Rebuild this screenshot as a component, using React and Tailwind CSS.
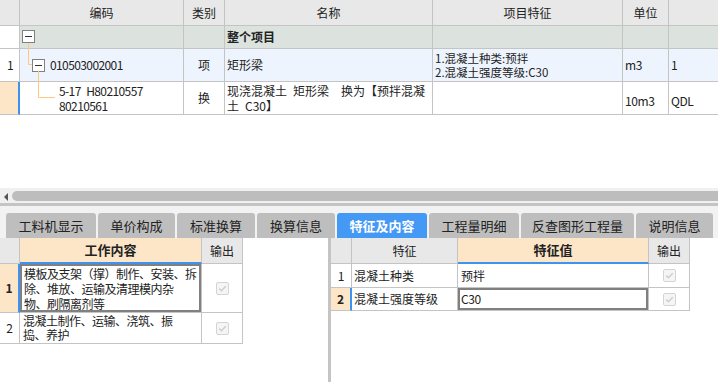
import React from 'react';

const FONT = "font-['Noto_Sans_CJK_SC',sans-serif]";

const Box = () => (
  <span className="flex h-[13px] w-[13px] items-center justify-center border border-[#808080] bg-white">
    <span className="h-px w-[7px] bg-[#333]" />
  </span>
);

const Check = () => (
  <svg width="13" height="13" viewBox="0 0 13 13">
    <rect x="0.5" y="0.5" width="12" height="12" rx="1.5" fill="#f5f5f5" stroke="#d4d4d4" />
    <path d="M3.3 6.6 L5.4 8.7 L9.8 4.2" fill="none" stroke="#cfcfcf" strokeWidth="1.6" />
  </svg>
);

const line = 'border-r border-b border-[#c4c4c4]';

const TopTable = () => (
  <div className="relative flex flex-col">
    {/* header */}
    <div className="flex h-[26px] bg-[#e8e8e8] text-[#222]">
      <div className={`w-[20px] ${line}`} />
      <div className={`w-[164px] ${line} flex items-center justify-center`}>编码</div>
      <div className={`w-[41px] ${line} flex items-center justify-center`}>类别</div>
      <div className={`w-[208px] ${line} flex items-center justify-center`}>名称</div>
      <div className={`w-[190px] ${line} flex items-center justify-center`}>项目特征</div>
      <div className={`w-[46px] ${line} flex items-center justify-center`}>单位</div>
      <div className="flex-1 border-b border-[#c4c4c4]" />
    </div>

    {/* 整个项目 */}
    <div className="flex h-[23px]">
      <div className={`w-[20px] ${line} bg-white`} />
      <div className={`w-[164px] ${line} bg-[#dce3df] pl-[2px] pt-[4px]`}>
        <Box />
      </div>
      <div className={`w-[41px] ${line} bg-[#dce3df]`} />
      <div className={`w-[208px] ${line} bg-[#dce3df] flex items-center pl-[2px] font-bold text-[#222]`}>整个项目</div>
      <div className={`w-[190px] ${line} bg-[#dce3df]`} />
      <div className={`w-[46px] ${line} bg-[#dce3df]`} />
      <div className="flex-1 border-b border-[#c4c4c4] bg-[#dce3df]" />
    </div>

    {/* row 1 */}
    <div className="flex h-[33px] bg-[#eef4fd] text-[#222]">
      <div className={`w-[20px] ${line} bg-white flex items-center pl-[7px]`}>1</div>
      <div className={`w-[164px] ${line} flex items-center pl-[12px] gap-[5px]`}>
        <Box />
        <span className="tracking-[-0.6px]">010503002001</span>
      </div>
      <div className={`w-[41px] ${line} flex items-center justify-center`}>项</div>
      <div className={`w-[208px] ${line} flex items-center pl-[2px]`}>矩形梁</div>
      <div className={`w-[190px] ${line} flex flex-col justify-center pl-[2px] leading-[14px] text-[11.5px]`}>
        <span>1.混凝土种类:预拌</span>
        <span>2.混凝土强度等级:C30</span>
      </div>
      <div className={`w-[46px] ${line} flex items-center pl-[2px] tracking-[-0.4px]`}>m3</div>
      <div className="flex-1 border-b border-[#c4c4c4] flex items-center pl-[2px]">1</div>
    </div>

    {/* row 2 */}
    <div className="flex h-[33px] bg-white text-[#222]">
      <div className="w-[20px] border-r-2 border-r-[#3d93f0] border-b border-b-[#c4c4c4] bg-[#fde6c8]" />
      <div className={`w-[164px] ${line} flex flex-col justify-center pl-[39px] leading-[15px] tracking-[-0.6px]`}>
        <span className="whitespace-pre">5-17{'\u2002'}H80210557</span>
        <span>80210561</span>
      </div>
      <div className={`w-[41px] ${line} flex items-center justify-center`}>换</div>
      <div className={`w-[208px] ${line} flex flex-col justify-center pl-[2px] leading-[15px]`}>
        <span className="whitespace-pre">现浇混凝土{'\u2002'}矩形梁{'\u2002\u2002'}换为【预拌混凝</span>
        <span className="whitespace-pre">土{'\u2002'}C30】</span>
      </div>
      <div className={`w-[190px] ${line}`} />
      <div className={`w-[46px] ${line} flex items-center pl-[2px] pt-[6px] tracking-[-0.4px]`}>10m3</div>
      <div className="flex-1 border-b border-[#c4c4c4] flex items-center pl-[2px] pt-[6px] tracking-[-0.4px]">QDL</div>
    </div>

    {/* tree connectors */}
    <svg className="absolute left-0 top-0" width="60" height="115">
      <path d="M28.5 43 V64.5 H32" fill="none" stroke="#ffc880" />
      <path d="M38.5 71 V97.5 H55" fill="none" stroke="#ffc880" />
    </svg>
  </div>
);

const tabs = [
  { label: '工料机显示', w: 'w-[90px]' },
  { label: '单价构成', w: 'w-[77px]' },
  { label: '标准换算', w: 'w-[78px]' },
  { label: '换算信息', w: 'w-[78px]' },
  { label: '特征及内容', w: 'w-[90px]', active: true },
  { label: '工程量明细', w: 'w-[90px]' },
  { label: '反查图形工程量', w: 'w-[113px]' },
  { label: '说明信息', w: 'w-[77px]' },
];

const hcell = 'border-r border-b border-[#c4c4c4] bg-[#e8e8e8] flex items-center justify-center';

const LeftPanel = () => (
  <div className="w-[328px] bg-white">
    <div className="flex h-[26px]">
      <div className={`w-[20px] ${hcell}`} />
      <div className="w-[182px] border-r border-[#c4c4c4] border-b-2 border-b-[#3d93f0] bg-[#fde6c8] flex items-center justify-center font-bold text-[13px] text-[#222]">
        工作内容
      </div>
      <div className={`w-[41px] ${hcell}`}>输出</div>
    </div>
    <div className="flex h-[49px]">
      <div className="w-[20px] border-r-2 border-r-[#3d93f0] border-b border-b-[#c4c4c4] bg-[#fde6c8] flex items-center justify-center font-bold">1</div>
      <div className="w-[182px] border-r border-b border-[#c4c4c4]">
        <div className="h-full overflow-hidden whitespace-nowrap border-2 border-[#808080] pl-[2px] leading-[15px] tracking-[-0.5px] text-[#222]">
          <div>模板及支架（撑）制作、安装、拆</div>
          <div>除、堆放、运输及清理模内杂</div>
          <div>物、刷隔离剂等</div>
        </div>
      </div>
      <div className="w-[41px] border-r border-b border-[#c4c4c4] flex items-center justify-center">
        <Check />
      </div>
    </div>
    <div className="flex h-[31px]">
      <div className="w-[20px] border-r border-b border-[#c4c4c4] flex items-center justify-center">2</div>
      <div className="w-[182px] border-r border-b border-[#c4c4c4] whitespace-nowrap pl-[3px] pt-px leading-[14px] tracking-[-0.5px] text-[#222]">
        <div>混凝土制作、运输、浇筑、振</div>
        <div>捣、养护</div>
      </div>
      <div className="w-[41px] border-r border-b border-[#c4c4c4] flex items-center justify-center">
        <Check />
      </div>
    </div>
  </div>
);

const RightPanel = () => (
  <div className="flex-1 bg-white">
    <div className="flex h-[26px] text-[#222]">
      <div className={`w-[21px] ${hcell}`} />
      <div className={`w-[106px] ${hcell}`}>特征</div>
      <div className="w-[191px] border-r border-[#c4c4c4] border-b-2 border-b-[#3d93f0] bg-[#fde6c8] flex items-center justify-center font-bold text-[13px]">
        特征值
      </div>
      <div className={`w-[41px] ${hcell}`}>输出</div>
    </div>
    <div className="flex h-[24px] text-[#222]">
      <div className="w-[21px] border-r border-b border-[#c4c4c4] flex items-center justify-center">1</div>
      <div className="w-[106px] border-r border-b border-[#c4c4c4] flex items-center pl-[2px]">混凝土种类</div>
      <div className="w-[191px] border-r border-b border-[#c4c4c4] flex items-center pl-[3px]">预拌</div>
      <div className="w-[41px] border-r border-b border-[#c4c4c4] flex items-center justify-center">
        <Check />
      </div>
    </div>
    <div className="flex h-[23px] text-[#222]">
      <div className="w-[21px] border-r-2 border-r-[#3d93f0] border-b border-b-[#c4c4c4] bg-[#fde6c8] flex items-center justify-center font-bold">2</div>
      <div className="w-[106px] border-r border-b border-[#c4c4c4] flex items-center pl-[2px]">混凝土强度等级</div>
      <div className="w-[191px] border-r border-b border-[#c4c4c4]">
        <div className="h-full border-2 border-[#808080] flex items-center pl-[1px] tracking-[-0.4px]">C30</div>
      </div>
      <div className="w-[41px] border-r border-b border-[#c4c4c4] flex items-center justify-center">
        <Check />
      </div>
    </div>
  </div>
);

export default function App() {
  return (
    <div className={`w-[718px] h-[382px] overflow-hidden bg-white flex flex-col text-[12px] text-[#222] ${FONT}`}>
      <TopTable />

      <div className="h-[73px] bg-white" />

      {/* horizontal scrollbar */}
      <div className="h-[15px] bg-[#f0f0f0] flex items-start pt-[3px]">
        <div className="w-[12px] flex justify-center pt-[2px]">
          <span className="h-0 w-0 border-y-[4px] border-y-transparent border-r-[4px] border-r-[#555]" />
        </div>
        <div className="flex-1 h-[10px] rounded-l-full bg-[#bdbdbd]" />
      </div>
      <div className="h-[3px] bg-[#c4c4c4]" />

      {/* tabs */}
      <div className="h-[32px] bg-[#f2f2f2] flex items-end pl-[6px] gap-[2px]">
        {tabs.map((t) => (
          <div
            key={t.label}
            className={`${t.w} h-[25px] rounded-t-[3px] flex items-center justify-center text-[13px] ${
              t.active ? 'bg-[#4499f5] text-white font-bold' : 'bg-[#bebebe] text-[#222]'
            }`}
          >
            {t.label}
          </div>
        ))}
      </div>

      {/* bottom panels */}
      <div className="flex-1 flex">
        <LeftPanel />
        <div className="w-[3px] bg-[#c4c4c4]" />
        <RightPanel />
      </div>
    </div>
  );
}
